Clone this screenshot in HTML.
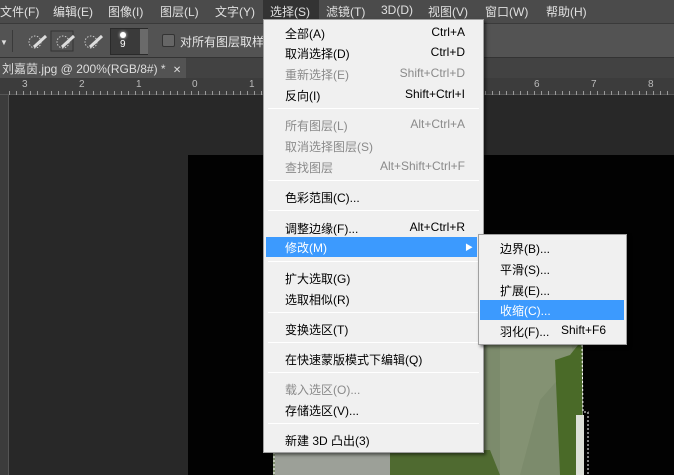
<!DOCTYPE html><html><head><meta charset="utf-8"><style>
*{margin:0;padding:0;box-sizing:border-box}
body{width:674px;height:475px;overflow:hidden;background:#282828;font-family:"Liberation Sans","Noto Sans CJK SC",sans-serif;font-size:12px;position:relative}
.a{position:absolute}
.mb{left:0;top:0;width:674px;height:24px;background:#4b4b4b;border-bottom:1px solid #3a3a3a}
.mb span{position:absolute;top:3px;color:#e0e0e0;font-size:12px}
.tb{left:0;top:24px;width:674px;height:34px;background:#535353;border-bottom:1px solid #333}
.tabs{left:0;top:58px;width:674px;height:20px;background:#424242}
.tab{left:0;top:58px;width:186px;height:20px;background:#535353;color:#ddd;font-size:12px;padding:2px 0 0 2px}
.rul{left:0;top:78px;width:674px;height:17px;background:#3c3c3c;border-bottom:1px solid #555}
.rul span{position:absolute;top:1px;color:#bbb;font-size:10px}
.lr{left:0;top:95px;width:9px;height:380px;background:#3c3c3c;border-right:1px solid #555}
.img{left:188px;top:155px;width:486px;height:320px;background:#020202}
.menu{left:263px;top:19px;width:221px;height:434px;background:#f0f0f0;border:1px solid #a0a0a0;box-shadow:2px 2px 3px rgba(0,0,0,.5)}
.it{position:absolute;left:0;width:219px;height:20px;color:#000;font-size:12px}
.it b{font-weight:normal;position:absolute;left:21px;top:2px}
.it i{font-style:normal;position:absolute;right:18px;top:2px}
.dis{color:#8a8a8a}
.sep{position:absolute;left:4px;width:211px;height:1px;background:#a8a8a8;border-bottom:1px solid #fff}
.sub{left:478px;top:234px;width:149px;height:111px;background:#f0f0f0;border:1px solid #a0a0a0;box-shadow:2px 2px 3px rgba(0,0,0,.5)}
.sub .it{width:147px}
</style></head><body>
<div class="a mb">
<span style="left:0">文件(F)</span><span style="left:53px">编辑(E)</span><span style="left:108px">图像(I)</span><span style="left:160px">图层(L)</span><span style="left:215px">文字(Y)</span>
<div class="a" style="left:263px;top:0;width:56px;height:23px;background:#333"></div>
<span style="left:270px">选择(S)</span><span style="left:326px">滤镜(T)</span><span style="left:381px">3D(D)</span><span style="left:428px">视图(V)</span><span style="left:485px">窗口(W)</span><span style="left:546px">帮助(H)</span>
</div>
<div class="a tb">
<div class="a" style="left:0;top:14px;color:#ddd;font-size:8px">▼</div>
<div class="a" style="left:12px;top:6px;width:1px;height:22px;background:#3a3a3a"></div>
<svg class="a" style="left:26px;top:6px" width="80" height="22"><g fill="none" stroke="#ccc" stroke-dasharray="1.5 1.5"><circle cx="9" cy="12" r="6"/><circle cx="37" cy="12" r="6"/><circle cx="65" cy="12" r="6"/></g><rect x="25" y="1" width="22" height="20" fill="none" stroke="#333"/><g stroke="#ddd" stroke-width="3"><path d="M8 17 L20 6"/><path d="M36 17 L48 6"/><path d="M64 17 L76 6"/></g></svg>
<div class="a" style="left:110px;top:4px;width:38px;height:27px;background:#3a3a3a;border:1px solid #2a2a2a"></div>
<div class="a" style="left:140px;top:5px;width:8px;height:25px;background:#6a6a6a"></div>
<div class="a" style="left:120px;top:8px;width:6px;height:6px;border-radius:50%;background:#fff;box-shadow:0 0 3px #fff"></div>
<div class="a" style="left:120px;top:15px;color:#fff;font-size:10px">9</div>
<div class="a" style="left:162px;top:10px;width:13px;height:13px;background:#666;border:1px solid #333;border-radius:2px"></div>
<div class="a" style="left:180px;top:9px;color:#e6e6e6">对所有图层取样</div>
</div>
<div class="a tabs"></div>
<div class="a tab">刘嘉茵.jpg @ 200%(RGB/8#) * <span style="margin-left:4px;font-size:10px">✕</span></div>
<div class="a rul"><span style="left:22px">3</span><span style="left:79px">2</span><span style="left:136px">1</span><span style="left:192px">0</span><span style="left:249px">1</span><span style="left:534px">6</span><span style="left:591px">7</span><span style="left:648px">8</span>
<div class="a" style="left:9px;top:13px;width:665px;height:4px;background:repeating-linear-gradient(90deg,#999 0 1px,transparent 1px 7px)"></div></div>
<div class="a lr"></div>
<div class="a img"></div>
<svg class="a" style="left:270px;top:340px" width="330" height="135"><rect x="3" y="0" width="310" height="135" fill="#7c8b6c"/><path d="M5 110 L120 110 L120 135 L5 135 Z" fill="#9ca098"/><path d="M120 110 L220 110 L230 135 L120 135 Z" fill="#4f6a30"/><path d="M230 0 L300 0 L305 20 L270 60 L250 135 L230 135 Z" fill="#8a9878" opacity=".6"/><path d="M285 20 L300 15 L312 0 L312 135 L290 135 Z" fill="#4a6a28"/><rect x="306" y="75" width="8" height="60" fill="#dde0d8"/><path d="M312 5 L313 72 L318 72 L318 135" fill="none" stroke="#fff" stroke-dasharray="2 2"/><path d="M4 112 L4 135" stroke="#fff" stroke-dasharray="2 2"/></svg>
<div class="a menu">
<div class="it" style="top:3px"><b>全部(A)</b><i>Ctrl+A</i></div>
<div class="it" style="top:23px"><b>取消选择(D)</b><i>Ctrl+D</i></div>
<div class="it dis" style="top:44px"><b>重新选择(E)</b><i>Shift+Ctrl+D</i></div>
<div class="it" style="top:65px"><b>反向(I)</b><i>Shift+Ctrl+I</i></div>
<div class="sep" style="top:88px"></div>
<div class="it dis" style="top:95px"><b>所有图层(L)</b><i>Alt+Ctrl+A</i></div>
<div class="it dis" style="top:116px"><b>取消选择图层(S)</b></div>
<div class="it dis" style="top:137px"><b>查找图层</b><i>Alt+Shift+Ctrl+F</i></div>
<div class="sep" style="top:160px"></div>
<div class="it" style="top:167px"><b>色彩范围(C)...</b></div>
<div class="sep" style="top:190px"></div>
<div class="it" style="top:198px"><b>调整边缘(F)...</b><i>Alt+Ctrl+R</i></div>
<div class="it" style="top:217px;left:2px;width:211px;background:#3c9afe;color:#fff"><b style="left:19px">修改(M)</b><i style="right:4px;font-size:8px;top:5px">▶</i></div>
<div class="sep" style="top:241px"></div>
<div class="it" style="top:248px"><b>扩大选取(G)</b></div>
<div class="it" style="top:269px"><b>选取相似(R)</b></div>
<div class="sep" style="top:292px"></div>
<div class="it" style="top:299px"><b>变换选区(T)</b></div>
<div class="sep" style="top:322px"></div>
<div class="it" style="top:329px"><b>在快速蒙版模式下编辑(Q)</b></div>
<div class="sep" style="top:352px"></div>
<div class="it dis" style="top:359px"><b>载入选区(O)...</b></div>
<div class="it" style="top:380px"><b>存储选区(V)...</b></div>
<div class="sep" style="top:403px"></div>
<div class="it" style="top:410px"><b>新建 3D 凸出(3)</b></div>
</div>
<div class="a sub">
<div class="it" style="top:3px"><b>边界(B)...</b></div>
<div class="it" style="top:24px"><b>平滑(S)...</b></div>
<div class="it" style="top:45px"><b>扩展(E)...</b></div>
<div class="it" style="top:65px;left:1px;width:144px;background:#3c9afe;color:#fff"><b style="left:20px">收缩(C)...</b></div>
<div class="it" style="top:86px"><b>羽化(F)...</b><i style="left:82px;right:auto">Shift+F6</i></div>
</div>
</body></html>
